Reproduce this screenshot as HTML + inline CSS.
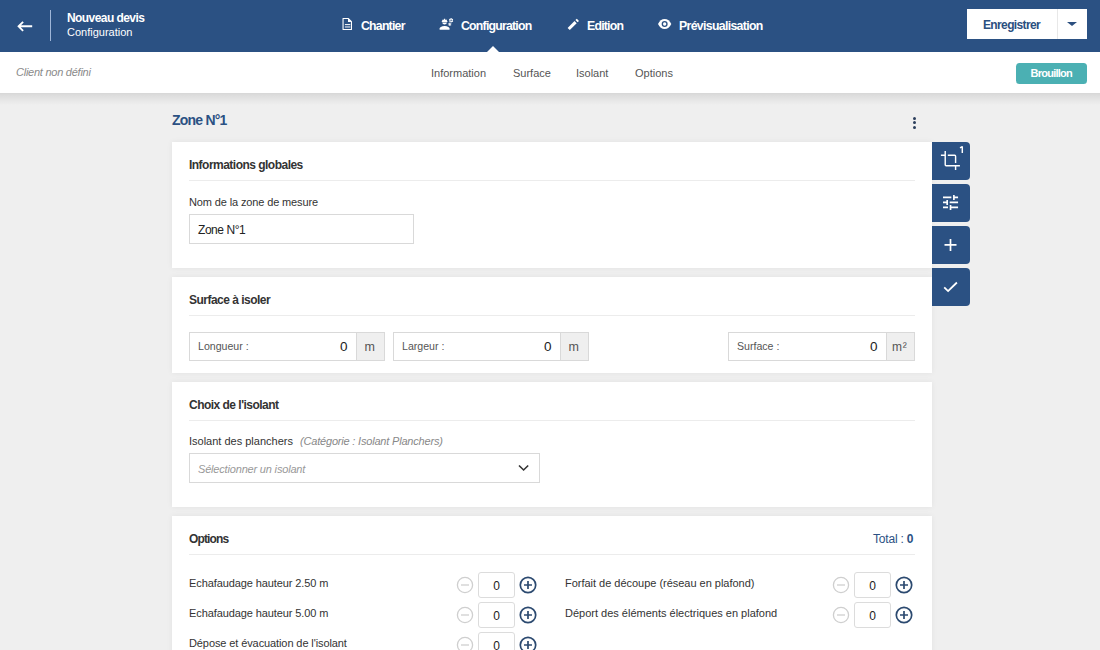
<!DOCTYPE html>
<html><head><meta charset="utf-8">
<style>
*{box-sizing:border-box;margin:0;padding:0}
html,body{width:1100px;height:650px;overflow:hidden;background:#efefef;font-family:"Liberation Sans",sans-serif;color:#222}
.abs{position:absolute}
#hdr{position:absolute;left:0;top:0;width:1100px;height:52px;background:#2b5183}
#sub{position:absolute;left:0;top:52px;width:1100px;height:41px;background:#fff}
#shd{position:absolute;left:0;top:93px;width:1100px;height:12px;background:linear-gradient(rgba(0,0,0,.1),rgba(0,0,0,.075) 20%,rgba(0,0,0,0))}
.t{position:absolute;white-space:nowrap;line-height:1}
.nav{font-size:12.3px;font-weight:bold;color:#fff;top:19.5px;letter-spacing:-0.78px}
.tab{font-size:11px;color:#555;top:16px}
.card{position:absolute;left:172px;width:760px;background:#fff;box-shadow:0 0 6px rgba(0,0,0,.06)}
.ct{left:17px;top:17px;font-size:12px;font-weight:bold;color:#333;letter-spacing:-0.52px}
.hr{position:absolute;left:17px;right:17px;height:1px;background:#ececec}
.lbl{font-size:11px;color:#333;letter-spacing:-0.1px}
.inp{position:absolute;border:1px solid #d9d9d9;background:#fff}
.addon{position:absolute;top:0;bottom:0;right:0;width:28px;background:#efefef;border-left:1px solid #d9d9d9}
.tb{position:absolute;left:932px;width:38px;height:38px;background:#2b5183;border-radius:0 4px 4px 0}
.tb svg{position:absolute;left:0;top:0}
.row{position:absolute;height:30px}
.cnt{position:absolute;width:37px;height:26px;border:1px solid #dcdcdc;border-radius:3px;background:#fff}
.cnt span{position:absolute;left:0;right:0;top:7px;text-align:center;font-size:12px;color:#222;line-height:1}
</style></head><body>
<div id="hdr">
  <svg class="abs" style="left:16px;top:20px" width="17" height="13" viewBox="0 0 17 13"><path d="M2.6 6.3H16.2M7.1 1.8L2.6 6.3L7.1 10.8" stroke="#fff" stroke-width="1.9" fill="none"/></svg>
  <div class="abs" style="left:50px;top:10px;width:1px;height:31px;background:#9fb6d8"></div>
  <div class="t" style="left:67px;top:12px;font-size:12px;font-weight:bold;color:#fff;letter-spacing:-0.57px">Nouveau devis</div>
  <div class="t" style="left:67px;top:27px;font-size:11px;color:#fff">Configuration</div>

  <!-- doc icon -->
  <svg class="abs" style="left:342px;top:18px" width="11" height="13" viewBox="0 0 11 13">
    <path d="M1.05 0.5H6.2L9.45 3.75V11.55H1.05Z" fill="none" stroke="#fff" stroke-width="1.1" stroke-linejoin="round"/>
    <path d="M6 0.4V4H9.6Z" fill="#fff"/>
    <rect x="2.9" y="6.1" width="5.4" height="1" fill="#fff"/>
    <rect x="2.9" y="8.3" width="5.4" height="1.3" fill="#fff" opacity=".75"/>
  </svg>
  <div class="t nav" style="left:361px">Chantier</div>
  <!-- engineer icon -->
  <svg class="abs" style="left:439.3px;top:16.4px" width="16" height="16">
    <g transform="scale(0.62,0.66)" fill="#fff">
    <path d="M9 15c-2.67 0-8 1.34-8 4v2h16v-2c0-2.66-5.33-4-8-4z"/>
    <path d="M4.74 9H13.26c.27 0 .49-.2.5-.46.01-.3-.23-.54-.5-.54H13c0-1.48-.81-2.75-2-3.45v.95c0 .28-.22.5-.5.5s-.5-.22-.5-.5V4.14C9.68 4.06 9.350 4 9 4s-.68.06-1 .14V5.5c0 .28-.22.5-.5.5S7 5.78 7 5.5v-.95C5.810 5.25 5 6.52 5 8h-.26c-.27 0-.49.2-.5.46-.01.3.23.54.5.54z"/>
    <path d="M9 13c1.86 0 3.41-1.28 3.86-3H5.14c.45 1.72 2 3 3.86 3z"/>
    <path fill-rule="evenodd" d="M21.98 6.23l.93-.83-.75-1.3-1.19.39c-.14-.11-.3-.2-.47-.27L20.25 3h-1.5l-.25 1.22c-.17.07-.33.16-.48.27l-1.18-.39-.75 1.3.93.83c-.02.17-.02.35 0 .52l-.93.85.75 1.3 1.2-.38c.13.1.28.18.43.25L18.75 10h1.5l.27-1.22c.16-.07.3-.15.44-.25l1.19.38.75-1.3-.93-.85c.03-.19.02-.36.01-.53zM19.5 7.75c-.69 0-1.25-.56-1.25-1.25s.56-1.25 1.25-1.250 1.25.56 1.25 1.25-.56 1.25-1.25 1.25z"/>
    <path fill-rule="evenodd" d="M19.4 10.79l-.85.28c-.1-.08-.21-.14-.33-.19l-.18-.87h-1.07l-.18.87c-.12.05-.24.12-.34.19l-.84-.28-.54.93.66.59c-.01.13-.01.25 0 .37l-.66.61.54.93.86-.27c.1.07.2.13.31.18l.18.88h1.07l.19-.87c.11-.05.22-.11.32-.18l.85.27.54-.93-.66-.61c.01-.13.01-.25 0-.37l.66-.59-.53-.94zM18 12.75c-.41 0-.75-.34-.75-.75s.34-.75.75-.75.75.34.75.75-.34.75-.75.75z"/>
    </g>
  </svg>
  <div class="t nav" style="left:461px">Configuration</div>
  <!-- pencil -->
  <svg class="abs" style="left:567px;top:18px" width="13" height="13" viewBox="0 0 13 13">
    <path d="M1.7 11L8.6 4.1M9.5 3.2L10.9 1.8" stroke="#fff" stroke-width="3.1" fill="none"/>
  </svg>
  <div class="t nav" style="left:587px">Edition</div>
  <!-- eye -->
  <svg class="abs" style="left:658px;top:19px" width="14" height="10" viewBox="0 0 14 10">
    <path d="M0 5C1.3 1.9 3.9 0 6.65 0S12 1.9 13.3 5C12 8.1 9.4 10 6.65 10S1.3 8.1 0 5Z" fill="#fff"/>
    <circle cx="6.65" cy="5" r="3" fill="#2b5183"/>
    <circle cx="6.65" cy="5" r="1.65" fill="#fff"/>
  </svg>
  <div class="t nav" style="left:679px;letter-spacing:-0.67px">Prévisualisation</div>
  <div class="abs" style="left:487px;top:46px;width:0;height:0;border-left:6px solid transparent;border-right:6px solid transparent;border-bottom:6px solid #fff"></div>

  <div class="abs" style="left:967px;top:9px;width:120px;height:30px;background:#fff"></div>
  <div class="t" style="left:983px;top:19px;font-size:12px;font-weight:bold;color:#2b4f7f;letter-spacing:-0.63px">Enregistrer</div>
  <div class="abs" style="left:1057px;top:9px;width:1px;height:30px;background:#e8e8e8"></div>
  <div class="abs" style="left:1067px;top:22px;width:0;height:0;border-left:5px solid transparent;border-right:5px solid transparent;border-top:4.5px solid #2b4f7f"></div>
</div>
<div id="shd"></div>
<div id="sub">
  <div class="t" style="left:16px;top:15px;font-size:11px;font-style:italic;color:#8a8a8a;letter-spacing:-0.25px">Client non défini</div>
  <div class="t tab" style="left:431px">Information</div>
  <div class="t tab" style="left:513px">Surface</div>
  <div class="t tab" style="left:576px">Isolant</div>
  <div class="t tab" style="left:635px">Options</div>
  <div class="abs" style="left:1016px;top:11px;width:71px;height:20.5px;background:#4bb0b3;border-radius:3.5px"></div>
  <div class="t" style="left:1030.5px;top:16px;font-size:11px;font-weight:bold;color:#fff;letter-spacing:-0.75px">Brouillon</div>
</div>

<div class="t" style="left:172px;top:113px;font-size:14px;font-weight:bold;color:#2b5183;letter-spacing:-0.79px">Zone N°1</div>
<div class="abs" style="left:913px;top:117px;width:3px;height:3px;border-radius:50%;background:#2b3e5c"></div>
<div class="abs" style="left:913px;top:121px;width:3px;height:3px;border-radius:50%;background:#2b3e5c"></div>
<div class="abs" style="left:913px;top:126px;width:3px;height:3px;border-radius:50%;background:#2b3e5c"></div>

<!-- card 1 -->
<div class="card" style="top:142px;height:126px">
  <div class="t ct">Informations globales</div>
  <div class="hr" style="top:38px"></div>
  <div class="t lbl" style="left:17px;top:55px;letter-spacing:-0.13px">Nom de la zone de mesure</div>
  <div class="inp" style="left:17px;top:72px;width:225px;height:30px">
    <div class="t" style="left:8px;top:9px;font-size:12px;color:#222;letter-spacing:-0.45px">Zone N°1</div>
  </div>
</div>
<!-- card 2 -->
<div class="card" style="top:277px;height:96px">
  <div class="t ct">Surface à isoler</div>
  <div class="hr" style="top:38px"></div>
  <div class="inp" style="left:17px;top:55px;width:196px;height:29px">
    <div class="t" style="left:8px;top:8px;font-size:10.6px;color:#555">Longueur :</div>
    <div class="t" style="left:150px;top:7px;font-size:13.5px;color:#222">0</div>
    <div class="addon"><div class="t" style="left:7.5px;top:7.5px;font-size:12.5px;color:#555">m</div></div>
  </div>
  <div class="inp" style="left:221px;top:55px;width:196px;height:29px">
    <div class="t" style="left:8px;top:8px;font-size:10.6px;color:#555">Largeur :</div>
    <div class="t" style="left:150px;top:7px;font-size:13.5px;color:#222">0</div>
    <div class="addon"><div class="t" style="left:7.5px;top:7.5px;font-size:12.5px;color:#555">m</div></div>
  </div>
  <div class="inp" style="left:556px;top:55px;width:187px;height:29px">
    <div class="t" style="left:8px;top:8px;font-size:10.6px;color:#555">Surface :</div>
    <div class="t" style="left:141px;top:7px;font-size:13.5px;color:#222">0</div>
    <div class="addon"><div class="t" style="left:5px;top:8px;font-size:12px;color:#555;letter-spacing:0.8px">m²</div></div>
  </div>
</div>
<!-- card 3 -->
<div class="card" style="top:382px;height:125px">
  <div class="t ct">Choix de l'isolant</div>
  <div class="hr" style="top:38px"></div>
  <div class="t lbl" style="left:17px;top:54px;letter-spacing:0">Isolant des planchers <span style="font-style:italic;color:#888;margin-left:4px;letter-spacing:-0.19px">(Catégorie : Isolant Planchers)</span></div>
  <div class="inp" style="left:17px;top:71px;width:351px;height:30px">
    <div class="t" style="left:8px;top:10px;font-size:11px;font-style:italic;color:#999;letter-spacing:-0.18px">Sélectionner un isolant</div>
    <svg class="abs" style="left:328px;top:10px" width="12" height="8" viewBox="0 0 12 8"><path d="M1 1.5L5.6 6L10.2 1.5" stroke="#333" stroke-width="1.6" fill="none"/></svg>
  </div>
</div>
<!-- card 4 -->
<div class="card" style="top:516px;height:200px">
  <div class="t ct" style="letter-spacing:-0.85px">Options</div>
  <div class="t" style="left:701px;top:17px;font-size:12px;color:#2b5183;letter-spacing:-0.2px">Total : <b>0</b></div>
  <div class="hr" style="top:38px"></div>
</div>

<div class="t lbl" style="left:189px;top:578px">Echafaudage hauteur 2.50 m</div>
<svg class="abs" style="left:456px;top:576px" width="18" height="18" viewBox="0 0 18 18"><circle cx="9" cy="9" r="7.6" stroke="#cfcfcf" stroke-width="1.3" fill="none"/><path d="M5 9H13" stroke="#cfcfcf" stroke-width="1.3"/></svg>
<div class="cnt" style="left:478px;top:572px"><span>0</span></div>
<svg class="abs" style="left:519px;top:576px" width="18" height="18" viewBox="0 0 18 18"><circle cx="9" cy="9" r="7.7" stroke="#2c4a70" stroke-width="1.7" fill="none"/><path d="M5 9H13M9 5V13" stroke="#2c4a70" stroke-width="1.7"/></svg>
<div class="t lbl" style="left:189px;top:608px">Echafaudage hauteur 5.00 m</div>
<svg class="abs" style="left:456px;top:606px" width="18" height="18" viewBox="0 0 18 18"><circle cx="9" cy="9" r="7.6" stroke="#cfcfcf" stroke-width="1.3" fill="none"/><path d="M5 9H13" stroke="#cfcfcf" stroke-width="1.3"/></svg>
<div class="cnt" style="left:478px;top:602px"><span>0</span></div>
<svg class="abs" style="left:519px;top:606px" width="18" height="18" viewBox="0 0 18 18"><circle cx="9" cy="9" r="7.7" stroke="#2c4a70" stroke-width="1.7" fill="none"/><path d="M5 9H13M9 5V13" stroke="#2c4a70" stroke-width="1.7"/></svg>
<div class="t lbl" style="left:189px;top:638px">Dépose et évacuation de l'isolant</div>
<svg class="abs" style="left:456px;top:636px" width="18" height="18" viewBox="0 0 18 18"><circle cx="9" cy="9" r="7.6" stroke="#cfcfcf" stroke-width="1.3" fill="none"/><path d="M5 9H13" stroke="#cfcfcf" stroke-width="1.3"/></svg>
<div class="cnt" style="left:478px;top:632px"><span>0</span></div>
<svg class="abs" style="left:519px;top:636px" width="18" height="18" viewBox="0 0 18 18"><circle cx="9" cy="9" r="7.7" stroke="#2c4a70" stroke-width="1.7" fill="none"/><path d="M5 9H13M9 5V13" stroke="#2c4a70" stroke-width="1.7"/></svg>
<div class="t lbl" style="left:565px;top:578px;letter-spacing:-0.02px">Forfait de découpe (réseau en plafond)</div>
<svg class="abs" style="left:832px;top:576px" width="18" height="18" viewBox="0 0 18 18"><circle cx="9" cy="9" r="7.6" stroke="#cfcfcf" stroke-width="1.3" fill="none"/><path d="M5 9H13" stroke="#cfcfcf" stroke-width="1.3"/></svg>
<div class="cnt" style="left:854px;top:572px"><span>0</span></div>
<svg class="abs" style="left:895px;top:576px" width="18" height="18" viewBox="0 0 18 18"><circle cx="9" cy="9" r="7.7" stroke="#2c4a70" stroke-width="1.7" fill="none"/><path d="M5 9H13M9 5V13" stroke="#2c4a70" stroke-width="1.7"/></svg>
<div class="t lbl" style="left:565px;top:608px;letter-spacing:0.0px">Déport des éléments électriques en plafond</div>
<svg class="abs" style="left:832px;top:606px" width="18" height="18" viewBox="0 0 18 18"><circle cx="9" cy="9" r="7.6" stroke="#cfcfcf" stroke-width="1.3" fill="none"/><path d="M5 9H13" stroke="#cfcfcf" stroke-width="1.3"/></svg>
<div class="cnt" style="left:854px;top:602px"><span>0</span></div>
<svg class="abs" style="left:895px;top:606px" width="18" height="18" viewBox="0 0 18 18"><circle cx="9" cy="9" r="7.7" stroke="#2c4a70" stroke-width="1.7" fill="none"/><path d="M5 9H13M9 5V13" stroke="#2c4a70" stroke-width="1.7"/></svg>
<div class="tb" style="top:142px">
  <svg width="38" height="38" viewBox="0 0 38 38">
    <g transform="translate(8.04,8.14) scale(0.864)" stroke="#fff" stroke-width="1.65" fill="none">
      <path d="M6 1V17Q6 18 7 18H23M1 6H6M18 18V23M9 6H17Q18 6 18 7V15"/>
    </g>
  </svg>
  <svg class="abs" style="left:0;top:0" width="38" height="38"><path d="M30.3 4.3V10.9M30.3 4.6L28 5.9" stroke="#fff" stroke-width="1.45" fill="none"/></svg>
</div>
<div class="tb" style="top:184px">
  <svg width="38" height="38" viewBox="0 0 38 38">
    <path transform="translate(8.5,8.4) scale(0.836)" fill="#fff" d="M3 17v2h6v-2H3zM3 5v2h10V5H3zm10 16v-2h8v-2h-8v-2h-2v6h2zM7 9v2H3v2h4v2h2V9H7zm14 4v-2H11v2h10zm-6-4h2V7h4V5h-4V3h-2v6z"/>
  </svg>
</div>
<div class="tb" style="top:226px">
  <svg width="38" height="38" viewBox="0 0 38 38"><path d="M18.5 12.9V24.9M12.5 18.9H24.5" stroke="#fff" stroke-width="1.7"/></svg>
</div>
<div class="tb" style="top:268px">
  <svg width="38" height="38" viewBox="0 0 38 38"><path d="M12.2 19.4L16.1 23.1L24.9 14.5" stroke="#fff" stroke-width="1.8" fill="none"/></svg>
</div>
</body></html>
